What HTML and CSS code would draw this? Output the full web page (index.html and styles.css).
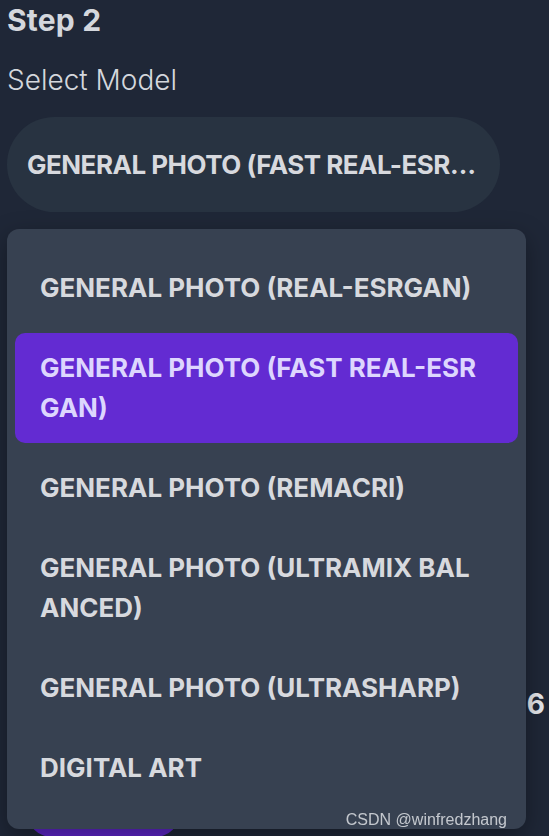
FILE: index.html
```html
<!DOCTYPE html>
<html lang="en">
<head>
<meta charset="utf-8">
<title>Step 2 - Select Model</title>
<link rel="stylesheet" href="styles.css">
</head>
<body>
  <main class="panel">
    <h2 class="step-title">Step 2</h2>
    <p class="field-label">Select Model</p>
    <div class="select-wrap">
      <div class="select-box">
        <span class="select-value">GENERAL PHOTO (FAST REAL-ESRGAN)</span>
      </div>
      <ul class="dropdown">
        <li class="option">GENERAL PHOTO (REAL-ESRGAN)</li>
        <li class="option selected">GENERAL PHOTO (FAST REAL-ESRGAN)</li>
        <li class="option">GENERAL PHOTO (REMACRI)</li>
        <li class="option">GENERAL PHOTO (ULTRAMIX BALANCED)</li>
        <li class="option">GENERAL PHOTO (ULTRASHARP)</li>
        <li class="option">DIGITAL ART</li>
      </ul>
    </div>
    <div class="scale-row">
      <span class="scale-value">x16</span>
    </div>
    <div class="actions">
      <button class="primary-btn">Upscayl</button>
    </div>
  </main>
  <div class="watermark">CSDN @winfredzhang</div>
</body>
</html>
```

FILE: styles.css
```css
* {
  box-sizing: border-box;
}

html, body {
  margin: 0;
  height: 100%;
  overflow: hidden;
}

body {
  background: #1f2737;
  font-family: Inter, "Open Sans", sans-serif;
  color: #d1d5db;
}

.panel {
  padding: 0 7px;
  display: flex;
  flex-direction: column;
}

.step-title {
  margin: 0;
  height: 44px;
  font-size: 30px;
  font-weight: 700;
  line-height: 40px;
  color: #d4d7dd;
  letter-spacing: 0.2px;
}

.field-label {
  margin: 0;
  height: 73px;
  font-size: 28px;
  font-weight: 300;
  line-height: 72px;
  color: #d4d7dd;
}

.select-wrap {
  position: relative;
  width: 493px;
}

.select-box {
  height: 95px;
  border-radius: 48px;
  background: #283341;
  display: flex;
  align-items: center;
  padding: 0 12px 0 20px;
}

.select-value {
  font-size: 26px;
  font-weight: 700;
  color: #d7d9de;
  white-space: nowrap;
  overflow: hidden;
  text-overflow: ellipsis;
  letter-spacing: -0.5px;
}

.dropdown {
  position: absolute;
  top: calc(100% + 17px);
  left: 0;
  width: 519px;
  height: 600px;
  margin: 0;
  padding: 24px 8px 17px;
  list-style: none;
  background: #374151;
  border-radius: 12px;
  box-shadow: 0 8px 24px rgba(0, 0, 0, 0.35);
  display: flex;
  flex-direction: column;
  gap: 10px;
  z-index: 10;
}

.option {
  padding: 15px 37px 15px 25px;
  font-size: 26px;
  font-weight: 700;
  line-height: 40px;
  color: #d7d9de;
  word-break: break-all;
  border-radius: 10px;
}

.option.selected {
  background: #632bd2;
  color: #ddd6fe;
}

.scale-row {
  margin-top: 474px;
  display: flex;
  justify-content: flex-end;
  align-items: center;
  height: 40px;
}

.scale-value {
  font-size: 28px;
  font-weight: 700;
  color: #e5e7eb;
  margin-right: -3px;
  margin-top: -4px;
}

.actions {
  margin-top: 61px;
  padding-left: 20px;
}

.primary-btn {
  width: 153px;
  height: 50px;
  border: none;
  border-radius: 25px;
  background: #5d25c8;
  color: #ffffff;
  font-family: inherit;
  font-size: 20px;
  font-weight: 700;
}

.watermark {
  position: fixed;
  right: 42px;
  bottom: 7px;
  font-family: "Liberation Sans", Arial, sans-serif;
  font-size: 16px;
  color: rgba(230, 232, 236, 0.8);
  z-index: 20;
}
```
